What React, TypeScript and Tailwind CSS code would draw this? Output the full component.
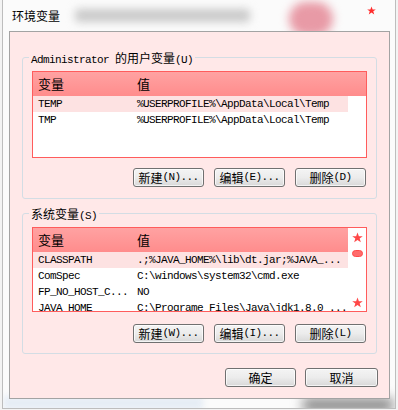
import React from 'react';

const mono = "font-['Liberation_Mono','Noto_Sans_CJK_SC',monospace] text-[11px] tracking-[-0.6px]";
const cjk = "font-['Noto_Sans_CJK_SC',sans-serif] text-[12px]";

// splits a label into CJK runs and ASCII runs so each gets its own font
const Txt: React.FC<{ s: string }> = ({ s }) => (
  <>
    {s.split(/([\u3400-\u9fff]+)/).filter(Boolean).map((part, i) =>
      /[\u3400-\u9fff]/.test(part) ? (
        <span key={i} className={cjk}>{part}</span>
      ) : (
        <span key={i} className={mono}>{part}</span>
      )
    )}
  </>
);

const Star: React.FC<{ size?: number; color?: string }> = ({ size = 10, color = '#ff4848' }) => (
  <svg width={size} height={size} viewBox="0 0 24 24" className="block">
    <polygon
      points="12,1 15,9 23.5,9 16.7,14.2 19.3,22.5 12,17.4 4.7,22.5 7.3,14.2 0.5,9 9,9"
      fill={color}
    />
  </svg>
);

const Btn: React.FC<{ label: string; w?: string }> = ({ label, w = 'w-[71px]' }) => (
  <div
    className={`${w} h-[19px] flex items-center justify-center rounded-[3px] border border-[#707070] bg-linear-to-b from-[#f4f4f4] via-[#ececec] to-[#d8d8d8] text-black leading-[17px] shadow-[inset_0_0_0_1px_rgba(255,255,255,0.7)]`}
  >
    <Txt s={label} />
  </div>
);

type Row = [string, string];

const userVars: Row[] = [
  ['TEMP', '%USERPROFILE%\\AppData\\Local\\Temp'],
  ['TMP', '%USERPROFILE%\\AppData\\Local\\Temp'],
];

const sysVars: Row[] = [
  ['CLASSPATH', '.;%JAVA_HOME%\\lib\\dt.jar;%JAVA_...'],
  ['ComSpec', 'C:\\windows\\system32\\cmd.exe'],
  ['FP_NO_HOST_C...', 'NO'],
  ['JAVA_HOME', 'C:\\Programe Files\\Java\\jdk1.8.0_...'],
];

const Rows: React.FC<{ rows: Row[] }> = ({ rows }) => (
  <>
    {rows.map(([k, v], i) => (
      <div key={k} className="flex h-[16px] leading-[16px] text-black whitespace-nowrap shrink-0">
        <div className={`flex w-[315px] ${i === 0 ? 'bg-[#fde2e2]' : ''}`}>
          <div className={`w-[104px] pl-[5px] ${mono}`}>{k}</div>
          <div className={`${mono}`}>{v}</div>
        </div>
      </div>
    ))}
  </>
);

const Header: React.FC<{ w: string }> = ({ w }) => (
  <div className={`${w} h-[24px] flex items-center bg-linear-to-b from-[#ffa2a2] to-[#ff8c8c] text-black leading-[24px] shrink-0`}>
    <div className={`w-[104px] pl-[5px] ${cjk} text-[13px]`}>变量</div>
    <div className={`${cjk} text-[13px]`}>值</div>
  </div>
);

const Group: React.FC<{ label: string; className?: string; children: React.ReactNode }> = ({
  label,
  className = '',
  children,
}) => (
  <div className={`ml-[12px] w-[355px] rounded-[3px] border border-[#d3dde4] ${className}`}>
    <div className="-mt-[8px] ml-[6px] w-fit h-[14px] px-[2px] bg-[#ffe8e8] leading-[14px] text-black whitespace-nowrap">
      <Txt s={label} />
    </div>
    {children}
  </div>
);

export default function App() {
  return (
    <div className="relative w-[398px] h-[410px] overflow-hidden bg-[#f3f3f3]">
      <div className="relative ml-[2px] w-[394px] h-[409px] border border-t-0 border-[#bdbdbd] bg-[#fbfbfb] overflow-hidden">
        {/* blurred desktop behind the glass frame */}
        <div className="absolute left-[286px] top-[2px] w-[44px] h-[34px] rounded-full bg-[#e89aa6] blur-[5px]" />
        <div className="absolute left-[72px] top-[9px] w-[175px] h-[13px] rounded bg-[#c9c9c9] blur-[4px]" />
        <div className="absolute left-[300px] top-[398px] w-[90px] h-[14px] bg-[#8a8a8a] blur-[6px]" />
        <div className="absolute left-[0px] top-[396px] w-[200px] h-[14px] bg-[#e6edf5] blur-[3px]" />
        <div className="absolute left-[364px] top-[6px]">
          <Star size={9} color="#ff2d2d" />
        </div>

        <div className="relative h-[31px] flex items-center pl-[9px]">
          <span className={`${cjk} text-black leading-[16px]`}>环境变量</span>
        </div>

        <div className="relative ml-[6px] w-[381px] h-[368px] border border-[#a3a3a3] bg-[#ffe8e8] flex flex-col">
          <Group label="Administrator 的用户变量(U)" className="mt-[25px]">
            <div className="ml-[9px] mt-[7px] w-[335px] h-[87px] border border-[#ff5c5c] bg-white overflow-hidden">
              <Header w="w-full" />
              <Rows rows={userVars} />
            </div>
            <div className="mt-[10px] mb-[11px] pr-[10px] flex justify-end gap-[10px]">
              <Btn label="新建(N)..." />
              <Btn label="编辑(E)..." />
              <Btn label="删除(D)" />
            </div>
          </Group>

          <Group label="系统变量(S)" className="mt-[14px]">
            <div className="ml-[9px] mt-[7px] w-[335px] h-[85px] border border-[#ff5c5c] bg-white overflow-hidden flex">
              <div className="w-[315px] flex flex-col">
                <Header w="w-[315px]" />
                <Rows rows={sysVars} />
              </div>
              <div className="w-[18px] flex flex-col items-center">
                <div className="mt-[4px]">
                  <Star size={11} />
                </div>
                <div className="mt-[7px] w-[11px] h-[7px] rounded-full bg-[#ff6b6b] border border-[#ff4a4a]" />
                <div className="mt-[40px]">
                  <Star size={11} />
                </div>
              </div>
            </div>
            <div className="mt-[12px] mb-[10px] pr-[10px] flex justify-end gap-[10px]">
              <Btn label="新建(W)..." />
              <Btn label="编辑(I)..." />
              <Btn label="删除(L)" />
            </div>
          </Group>

          <div className="mt-[14px] pr-[11px] flex justify-end gap-[9px]">
            <Btn label="确定" />
            <Btn label="取消" w="w-[73px]" />
          </div>
        </div>
      </div>
    </div>
  );
}
